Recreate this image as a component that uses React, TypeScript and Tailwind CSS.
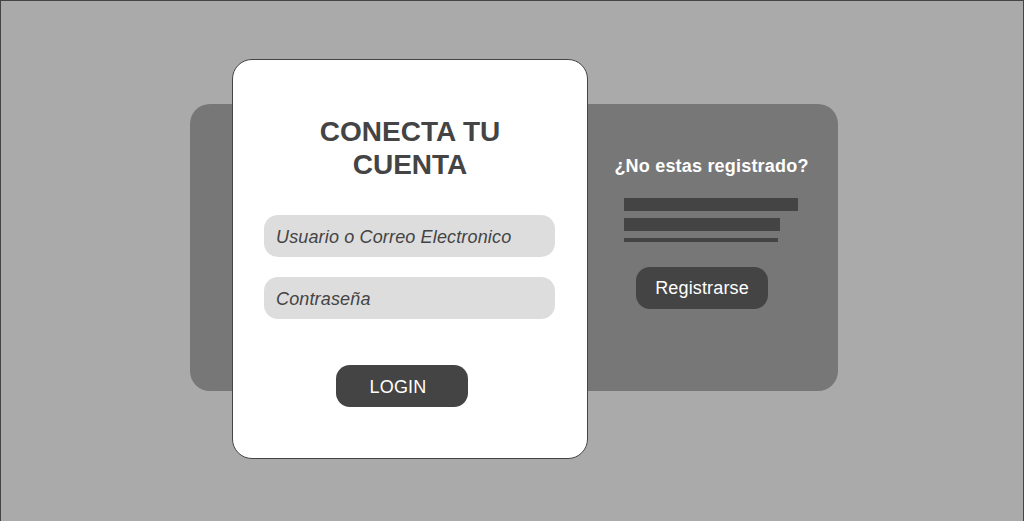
export default function App() {
  return (
    <div
      className="h-[521px] w-full overflow-hidden border-x border-t border-[#444444] bg-[#aaaaaa] pl-[189px] pt-[103px]"
      style={{ fontFamily: '"Liberation Sans", Arial, sans-serif' }}
    >
      {/* panel trasero */}
      <div className="flex h-[287px] w-[648px] rounded-[20px] bg-[#777777]">
        {/* tarjeta de login */}
        <div className="-mt-[45px] ml-[42px] flex h-[400px] w-[356px] shrink-0 flex-col rounded-[20px] border border-[#444444] bg-white px-[31px] pt-[55px]">
          <h1 className="text-center text-[28px] font-bold leading-[33px] text-[#444444]">
            CONECTA TU
            <br />
            CUENTA
          </h1>
          <div className="mt-[34px] flex h-[42px] w-[291px] items-center rounded-[14px] bg-[#dddddd] pl-[12px] pt-[2px] text-[18px] italic tracking-[0.15px] text-[#444444]">
            Usuario o Correo Electronico
          </div>
          <div className="mt-[20px] flex h-[42px] w-[291px] items-center rounded-[14px] bg-[#dddddd] pl-[12px] pt-[2px] text-[18px] italic tracking-[0.15px] text-[#444444]">
            Contraseña
          </div>
          <button className="ml-[72px] mt-[46px] flex h-[42px] w-[132px] items-center justify-center rounded-[14px] bg-[#444444] pr-[8px] pt-[2px] text-[18px] tracking-[0.2px] text-white">
            LOGIN
          </button>
        </div>

        {/* registro */}
        <div className="flex flex-1 flex-col pt-[51px]">
          <h2 className="w-full pr-[3px] text-center text-[18px] font-bold leading-[22px] tracking-[0.2px] text-white">
            ¿No estas registrado?
          </h2>
          <div className="ml-[36px] mt-[21px] flex flex-col gap-[7px]">
            <div className="h-[13px] w-[174px] bg-[#444444]" />
            <div className="h-[13px] w-[156px] bg-[#444444]" />
            <div className="h-[4px] w-[154px] bg-[#444444]" />
          </div>
          <button className="ml-[48px] mt-[25px] flex h-[42px] w-[132px] items-center justify-center rounded-[14px] bg-[#444444] pt-[1px] text-[18px] tracking-[0.15px] text-white">
            Registrarse
          </button>
        </div>
      </div>
    </div>
  );
}
